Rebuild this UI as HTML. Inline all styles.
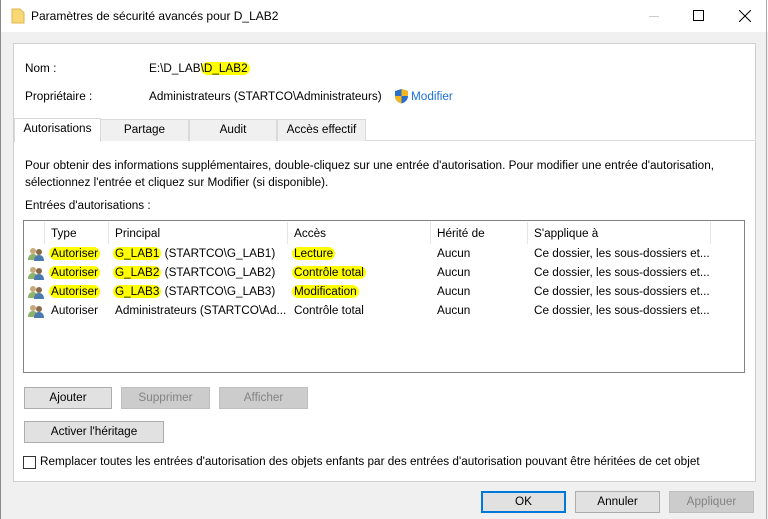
<!DOCTYPE html>
<html><head><meta charset="utf-8"><style>
*{margin:0;padding:0;box-sizing:border-box}
body{width:768px;height:519px;background:#f0f0f0;font-family:"Liberation Sans",sans-serif;font-size:11.75px;color:#000;position:relative;overflow:hidden}
.a{position:absolute;white-space:nowrap}
.hl{background:#ffff00;border-radius:8px;padding:0 2px}
.btn{position:absolute;height:22px;border:1px solid #adadad;background:#e1e1e1;text-align:center;line-height:20px}
.dis{color:#838383;background:#cccccc;border-color:#bfbfbf}
.tab{position:absolute;top:119px;height:22px;border:1px solid #d9d9d9;border-bottom:none;background:#f0f0f0;text-align:center;line-height:20px}
</style></head><body>
<div class="a" style="left:0;top:0;width:768px;height:32px;background:#fff"></div>
<div class="a" style="left:0;top:0;width:1px;height:519px;background:#888"></div>
<div class="a" style="left:766px;top:0;width:1px;height:519px;background:#aaa"></div>
<svg class="a" style="left:11px;top:8px" width="14" height="16"><path d="M1 1h8l4 4v10H1z" fill="#f8d775" stroke="#e0b64a"/></svg>
<div class="a" style="left:31px;top:9px;font-size:12px">Paramètres de sécurité avancés pour D_LAB2</div>
<div class="a" style="left:649px;top:16px;width:10px;height:1px;background:#ccc"></div>
<div class="a" style="left:693px;top:10px;width:11px;height:11px;border:1px solid #000"></div>
<svg class="a" style="left:739px;top:10px" width="12" height="12"><path d="M0 0L12 12M12 0L0 12" stroke="#000" stroke-width="1"/></svg>

<div class="a" style="left:13px;top:43px;width:743px;height:439px;background:#fff;border:1px solid #d0d0d0"></div>
<div class="a" style="left:25px;top:62px">Nom :</div>
<div class="a" style="left:149px;top:62px">E:\D_LAB<span class="hl" style="padding:0 2px 0 0">\D_LAB2</span></div>
<div class="a" style="left:25px;top:90px">Propriétaire :</div>
<div class="a" style="left:149px;top:90px">Administrateurs (STARTCO\Administrateurs)</div>
<svg class="a" style="left:394px;top:88px" width="15" height="16"><path d="M7.5 1L14 3v5c0 4-3 6.5-6.5 7.5C4 14.5 1 12 1 8V3z" fill="#2a6fc9"/><path d="M7.5 1L14 3v5H7.5zM1 8h6.5v7.5C4 14.5 1 12 1 8z" fill="#f3b623"/></svg>
<div class="a" style="left:411px;top:90px;color:#1e6ed8">Modifier</div>

<div class="a" style="left:13px;top:140px;width:743px;height:1px;background:#d9d9d9"></div>
<div class="tab" style="left:100px;width:89px">Partage</div>
<div class="tab" style="left:189px;width:88px">Audit</div>
<div class="tab" style="left:277px;width:89px">Accès effectif</div>
<div class="tab" style="left:14px;top:118px;width:87px;height:24px;background:#fff;border-color:#d9d9d9">Autorisations</div>

<div class="a" style="left:25px;top:157px;line-height:17px">Pour obtenir des informations supplémentaires, double-cliquez sur une entrée d'autorisation. Pour modifier une entrée d'autorisation,<br>sélectionnez l'entrée et cliquez sur Modifier (si disponible).</div>
<div class="a" style="left:25px;top:199px">Entrées d'autorisations :</div>

<div class="a" style="left:23px;top:220px;width:722px;height:153px;border:1px solid #828282;background:#fff"></div>
<div class="a" style="left:44px;top:222px;width:1px;height:22px;background:#e5e5e5"></div>
<div class="a" style="left:108px;top:222px;width:1px;height:22px;background:#e5e5e5"></div>
<div class="a" style="left:287px;top:222px;width:1px;height:22px;background:#e5e5e5"></div>
<div class="a" style="left:430px;top:222px;width:1px;height:22px;background:#e5e5e5"></div>
<div class="a" style="left:527px;top:222px;width:1px;height:22px;background:#e5e5e5"></div>
<div class="a" style="left:710px;top:222px;width:1px;height:22px;background:#e5e5e5"></div>
<div class="a" style="left:51px;top:227px">Type</div>
<div class="a" style="left:115px;top:227px">Principal</div>
<div class="a" style="left:294px;top:227px">Accès</div>
<div class="a" style="left:437px;top:227px">Hérité de</div>
<div class="a" style="left:534px;top:227px">S'applique à</div>

<div style="position:absolute;left:0;top:247px">
<svg class="a" style="left:28px;top:0" width="16" height="14"><circle cx="5" cy="4" r="3" fill="#c7a97a"/><path d="M0 13c0-4 2-6 5-6s5 2 5 6z" fill="#8bb36b"/><circle cx="11" cy="5" r="3" fill="#8a6a4a"/><path d="M6 14c0-4 2-6 5-6s5 2 5 6z" fill="#4a7ab0"/></svg>
<div class="a" style="left:49px;top:0"><span class="hl">Autoriser</span></div>
<div class="a" style="left:113px;top:0"><span class="hl">G_LAB1</span> (STARTCO\G_LAB1)</div>
<div class="a" style="left:292px;top:0"><span class="hl">Lecture</span></div>
<div class="a" style="left:437px;top:0">Aucun</div>
<div class="a" style="left:534px;top:0">Ce dossier, les sous-dossiers et...</div>
</div>
<div style="position:absolute;left:0;top:266px">
<svg class="a" style="left:28px;top:0" width="16" height="14"><circle cx="5" cy="4" r="3" fill="#c7a97a"/><path d="M0 13c0-4 2-6 5-6s5 2 5 6z" fill="#8bb36b"/><circle cx="11" cy="5" r="3" fill="#8a6a4a"/><path d="M6 14c0-4 2-6 5-6s5 2 5 6z" fill="#4a7ab0"/></svg>
<div class="a" style="left:49px;top:0"><span class="hl">Autoriser</span></div>
<div class="a" style="left:113px;top:0"><span class="hl">G_LAB2</span> (STARTCO\G_LAB2)</div>
<div class="a" style="left:292px;top:0"><span class="hl">Contrôle total</span></div>
<div class="a" style="left:437px;top:0">Aucun</div>
<div class="a" style="left:534px;top:0">Ce dossier, les sous-dossiers et...</div>
</div>
<div style="position:absolute;left:0;top:285px">
<svg class="a" style="left:28px;top:0" width="16" height="14"><circle cx="5" cy="4" r="3" fill="#c7a97a"/><path d="M0 13c0-4 2-6 5-6s5 2 5 6z" fill="#8bb36b"/><circle cx="11" cy="5" r="3" fill="#8a6a4a"/><path d="M6 14c0-4 2-6 5-6s5 2 5 6z" fill="#4a7ab0"/></svg>
<div class="a" style="left:49px;top:0"><span class="hl">Autoriser</span></div>
<div class="a" style="left:113px;top:0"><span class="hl">G_LAB3</span> (STARTCO\G_LAB3)</div>
<div class="a" style="left:292px;top:0"><span class="hl">Modification</span></div>
<div class="a" style="left:437px;top:0">Aucun</div>
<div class="a" style="left:534px;top:0">Ce dossier, les sous-dossiers et...</div>
</div>
<div style="position:absolute;left:0;top:304px">
<svg class="a" style="left:28px;top:0" width="16" height="14"><circle cx="5" cy="4" r="3" fill="#c7a97a"/><path d="M0 13c0-4 2-6 5-6s5 2 5 6z" fill="#8bb36b"/><circle cx="11" cy="5" r="3" fill="#8a6a4a"/><path d="M6 14c0-4 2-6 5-6s5 2 5 6z" fill="#4a7ab0"/></svg>
<div class="a" style="left:51px;top:0">Autoriser</div>
<div class="a" style="left:115px;top:0">Administrateurs (STARTCO\Ad...</div>
<div class="a" style="left:294px;top:0">Contrôle total</div>
<div class="a" style="left:437px;top:0">Aucun</div>
<div class="a" style="left:534px;top:0">Ce dossier, les sous-dossiers et...</div>
</div>

<div class="btn" style="left:24px;top:387px;width:88px">Ajouter</div>
<div class="btn dis" style="left:121px;top:387px;width:89px">Supprimer</div>
<div class="btn dis" style="left:219px;top:387px;width:89px">Afficher</div>
<div class="btn" style="left:24px;top:421px;width:140px">Activer l'héritage</div>
<div class="a" style="left:23px;top:456px;width:13px;height:13px;border:1px solid #333;background:#fff"></div>
<div class="a" style="left:40px;top:455px">Remplacer toutes les entrées d'autorisation des objets enfants par des entrées d'autorisation pouvant être héritées de cet objet</div>

<div class="btn" style="left:481px;top:491px;width:85px;border:2px solid #0078d7;line-height:18px">OK</div>
<div class="btn" style="left:575px;top:491px;width:85px">Annuler</div>
<div class="btn dis" style="left:669px;top:491px;width:85px">Appliquer</div>
</body></html>
